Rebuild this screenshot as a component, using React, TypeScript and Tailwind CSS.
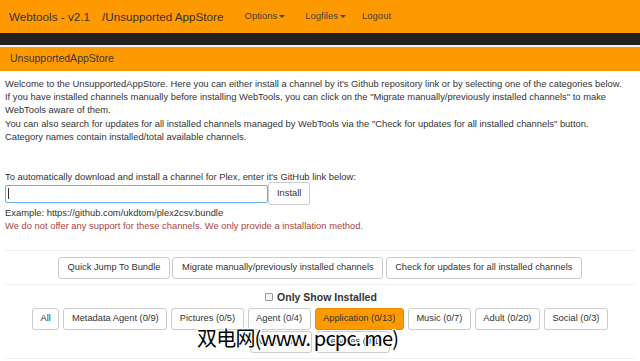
import React from "react";

const font = { fontFamily: '"Liberation Sans", Arial, sans-serif' };

function Caret() {
  return (
    <span className="ml-[2px] inline-block h-0 w-0 border-x-[3px] border-t-[3px] border-x-transparent border-t-[#444] align-middle" />
  );
}

function Btn({ children, active, wide }: { children: React.ReactNode; active?: boolean; wide?: boolean }) {
  return (
    <button
      className={
        "h-[22px] shrink-0 whitespace-nowrap rounded-[3px] border text-[9.3px] leading-none " +
        (wide ? "px-[8.5px] " : "px-[7.5px] ") +
        (active
          ? "border-[#e68a00] bg-[#ff9900] text-[#333]"
          : "border-[#ccc] bg-white text-[#333]")
      }
    >
      {children}
    </button>
  );
}

export default function App() {
  const row1: [string, boolean?][] = [
    ["All"],
    ["Metadata Agent (0/9)"],
    ["Pictures (0/5)"],
    ["Agent (0/4)"],
    ["Application (0/13)", true],
    ["Music (0/7)"],
    ["Adult (0/20)"],
    ["Social (0/3)"],
  ];
  const row2 = ["Video (0/2)", "Services (0/1)"];
  return (
    <div className="relative h-[361px] w-[640px] overflow-hidden bg-white text-[#333]" style={font}>
      {/* navbar */}
      <div className="flex h-[33px] items-center bg-[#ff9900] pl-[9px]">
        <span className="whitespace-nowrap text-[11.7px] text-[#333]">
          Webtools - v2.1<span className="ml-[12px]">/Unsupported AppStore</span>
        </span>
        <div className="ml-[21px] flex items-center text-[9.5px] text-[#444]">
          <span>
            Options
            <Caret />
          </span>
          <span className="ml-[20px]">
            Logfiles
            <Caret />
          </span>
          <span className="ml-[16px]">Logout</span>
        </div>
      </div>
      <div className="h-[12px] bg-[#222]" />
      <div className="h-[2px] bg-[#f2f2f2]" />
      {/* panel heading */}
      <div className="flex h-[24px] items-center bg-[#ff9900] pl-[10px] text-[10.5px] text-[#3a3a3a]">
        UnsupportedAppStore
      </div>
      {/* body */}
      <div className="px-[5px] pt-[6px] text-[9.4px] leading-[13.2px]">
        <p>
          Welcome to the UnsupportedAppStore. Here you can either install a channel by it's Github repository link or
          by selecting one of the categories below.
        </p>
        <p>
          If you have installed channels manually before installing WebTools, you can click on the "Migrate
          manually/previously installed channels" to make WebTools aware of them.
        </p>
        <p>You can also search for updates for all installed channels managed by WebTools via the "Check for updates for all installed channels" button.</p>
        <p>Category names contain installed/total available channels.</p>
        <p className="mt-[27px]">To automatically download and install a channel for Plex, enter it's GitHub link below:</p>
        <div className="mt-[-1px] flex items-center">
          <div className="flex h-[18px] w-[263px] items-center rounded-[2px] border border-[#66afe9] pl-[2px]">
            <span className="h-[11px] w-px bg-[#333]" />
          </div>
          <button className="h-[23px] rounded-[3px] border border-[#ccc] bg-white px-[8px] text-[9.3px]">Install</button>
        </div>
        <p className="mt-[1px]">Example: https://github.com/ukdtom/plex2csv.bundle</p>
        <p className="text-[#a94442]">We do not offer any support for these channels. We only provide a installation method.</p>
        <div className="mt-[17px] h-px bg-[#eee]" />
        <div className="mt-[6px] flex justify-center gap-[2.5px]">
          <Btn wide>Quick Jump To Bundle</Btn>
          <Btn wide>Migrate manually/previously installed channels</Btn>
          <Btn wide>Check for updates for all installed channels</Btn>
        </div>
        <div className="mt-[5px] h-px bg-[#eee]" />
        <div className="mt-[6px] flex items-center justify-center gap-[4px] pl-[2px] text-[10.5px] font-bold">
          <span className="h-[8px] w-[8px] rounded-[1px] border border-[#999] bg-[#f4f4f4]" />
          Only Show Installed
        </div>
        <div className="mt-[4px] flex flex-col items-center gap-y-[1px]">
          <div className="flex justify-center gap-x-[4px]">
            {row1.map(([c, a]) => (
              <Btn key={c} active={a}>
                {c}
              </Btn>
            ))}
          </div>
          <div className="flex justify-center gap-x-[4px]">
            {row2.map((c) => (
              <Btn key={c}>{c}</Btn>
            ))}
          </div>
        </div>
        <div className="mt-[5px] h-px bg-[#eee]" />
      </div>
      {/* watermark */}
      <div
        className="absolute left-[197px] top-[328px] whitespace-nowrap text-[20px] leading-none tracking-[-0.8px] text-black [text-shadow:1px_1px_0_#fff,-1px_-1px_0_#fff,1px_-1px_0_#fff,-1px_1px_0_#fff,0_1px_0_#fff,0_-1px_0_#fff,1px_0_0_#fff,-1px_0_0_#fff]"
        style={{ fontFamily: '"Noto Sans CJK SC", sans-serif' }}
      >
        双电网(www. pcpc. me)
      </div>
    </div>
  );
}
